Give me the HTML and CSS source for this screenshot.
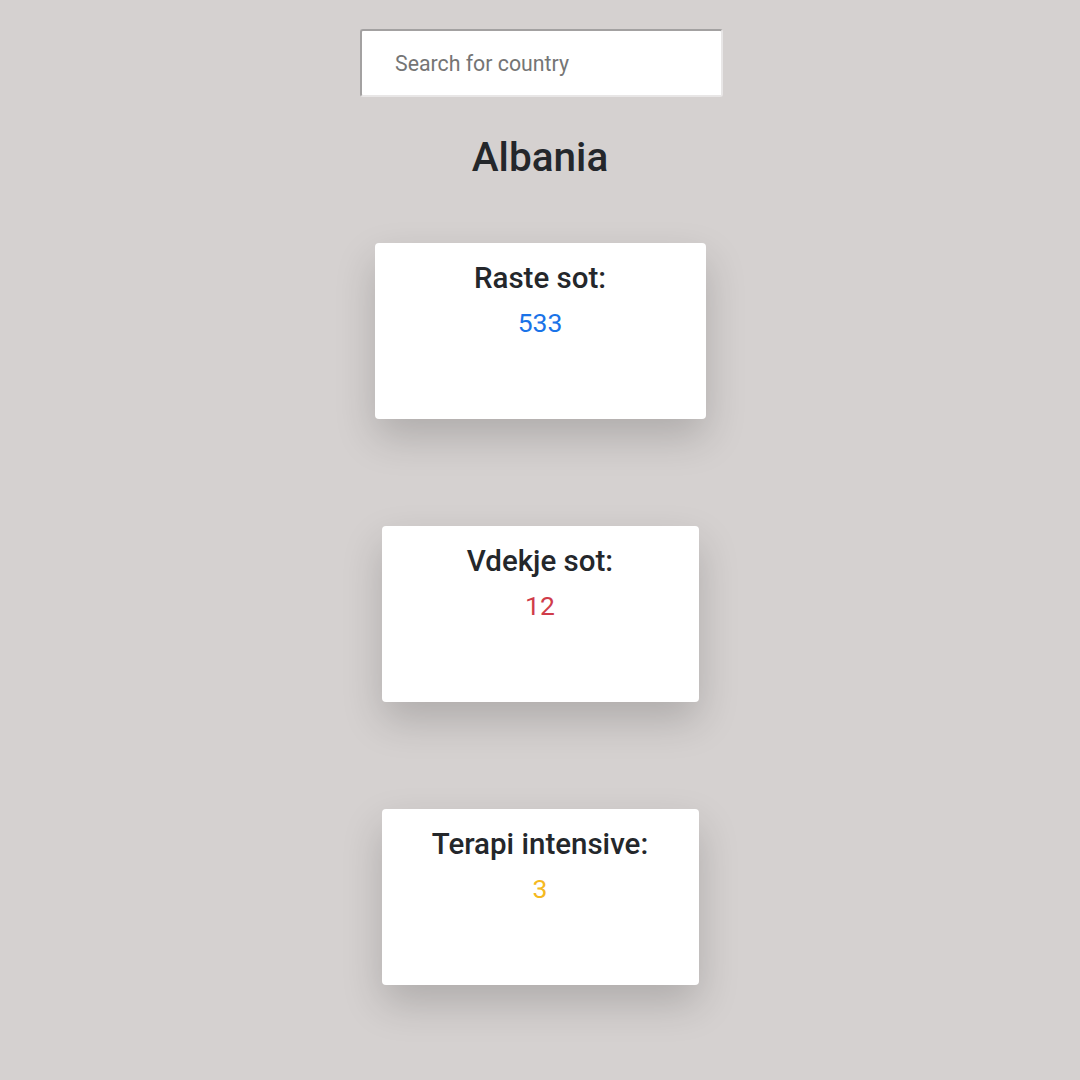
FILE: index.html
```html
<!DOCTYPE html>
<html lang="sq">
<head>
    <meta charset="UTF-8">
    <meta name="viewport" content="width=device-width, initial-scale=1.0">
    <title>Covid Albania</title>
    <link rel="stylesheet" href="styles.css">
</head>
<body>
    <div class="search">
        <input type="text" placeholder="Search for country">
    </div>
    <h1 class="country">Albania</h1>
    <div class="stats">
        <div class="card card-wide">
            <h3>Raste sot:</h3>
            <p class="num cases">533</p>
        </div>
        <div class="card">
            <h3>Vdekje sot:</h3>
            <p class="num deaths">12</p>
        </div>
        <div class="card">
            <h3>Terapi intensive:</h3>
            <p class="num critical">3</p>
        </div>
    </div>
</body>
</html>
```

FILE: styles.css
```css
* {
    box-sizing: border-box;
}
body {
    margin: 0;
    padding-bottom: 90px;
    background: #d5d1d0;
    font-family: Roboto, "Liberation Sans", sans-serif;
    color: #212529;
    display: flex;
    flex-direction: column;
    align-items: center;
}
.search {
    margin-top: 29px;
    margin-left: 3px;
    display: flex;
    justify-content: center;
}
.search input {
    width: 363px;
    height: 68px;
    border: 2px solid #a3a1a1;
    border-right-color: #e8e6e6;
    border-bottom-color: #e8e6e6;
    border-radius: 3px;
    background: #fff;
    padding: 0 0 0 33px;
    font-family: Roboto, "Liberation Sans", sans-serif;
    font-size: 21.3px;
    color: #333;
    outline: none;
}
.search input::placeholder {
    color: #757575;
}
.country {
    margin: 36px 0 0;
    font-size: 40.5px;
    font-weight: 500;
    line-height: 48px;
    text-align: center;
    color: #24272b;
}
.stats {
    margin-top: 62px;
    display: flex;
    flex-direction: column;
    align-items: center;
    gap: 107px;
}
.card {
    width: 317px;
    height: 176px;
    background: #fff;
    border-radius: 4px;
    padding-top: 18px;
    text-align: center;
    box-shadow: 0 18px 40px rgba(0, 0, 0, 0.18);
}
.card-wide {
    width: 331px;
}
.card h3 {
    margin: 0;
    font-size: 29.5px;
    font-weight: 500;
    line-height: 35px;
    color: #24272b;
}
.num {
    margin: 9px 0 0;
    font-size: 26.5px;
    line-height: 36px;
}
.cases {
    color: #1a73e8;
}
.deaths {
    color: #d03c4a;
}
.critical {
    color: #f5b921;
}
```
